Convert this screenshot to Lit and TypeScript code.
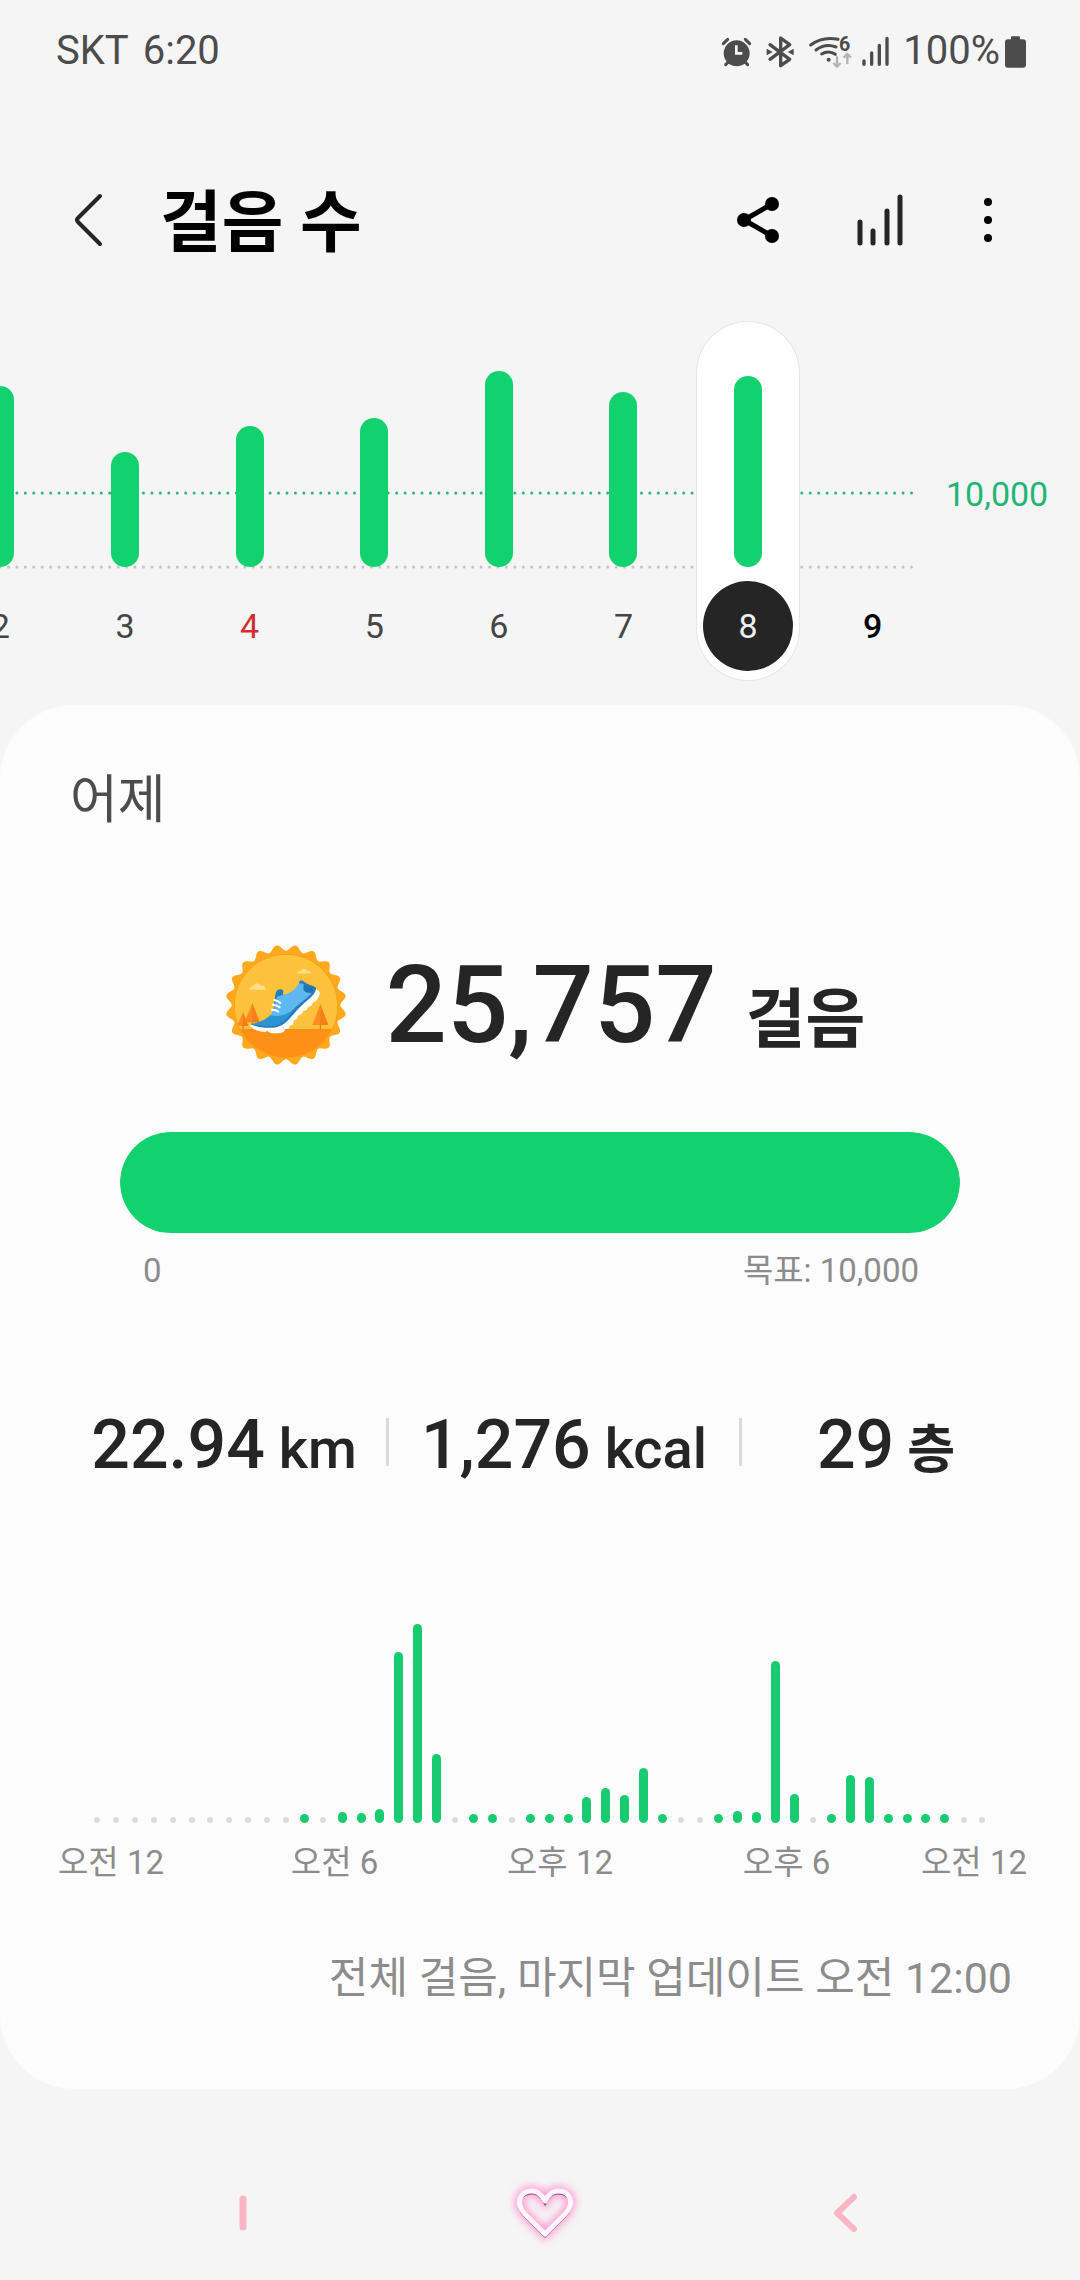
import { LitElement, html, css, svg } from "lit";
import { customElement, property, state } from "lit/decorators.js";
import { classMap } from "lit/directives/class-map.js";
import { styleMap } from "lit/directives/style-map.js";

interface Day {
  label: string;
  height: number;
  kind?: "holiday" | "today";
}

const DAYS: Day[] = [
  { label: "2", height: 181 },
  { label: "3", height: 115 },
  { label: "4", height: 141, kind: "holiday" },
  { label: "5", height: 149 },
  { label: "6", height: 196 },
  { label: "7", height: 175 },
  { label: "8", height: 191 },
  { label: "9", height: 0, kind: "today" },
];

// One value per half hour; 0 marks a slot without steps.
const HALF_HOURS = [
  0, 0, 0, 0, 0, 0, 0, 0, 0, 0, 0, 9, 0, 11, 10, 14, 171, 199, 69, 0, 9, 9, 0, 9,
  9, 9, 26, 35, 28, 55, 9, 0, 0, 9, 12, 11, 162, 29, 0, 9, 48, 46, 9, 9, 9, 9, 0, 0,
];

const HOUR_LABELS = ["오전 12", "오전 6", "오후 12", "오후 6", "오전 12"];

const sealPath = (() => {
  const points: string[] = [];
  for (let i = 0; i < 360; i++) {
    const a = (i * Math.PI) / 180;
    const r = 172 + 9 * Math.cos(20 * a + Math.PI);
    points.push(`${(217 + r * Math.sin(a)).toFixed(1)} ${(210 - r * Math.cos(a)).toFixed(1)}`);
  }
  return `M${points.join("L")}Z`;
})();

@customElement("status-bar")
class StatusBar extends LitElement {
  static styles = css`
    :host {
      display: flex;
      align-items: center;
      justify-content: space-between;
      height: 102px;
      padding: 0 53px 0 56px;
      color: #4c4c4c;
      font-size: 40px;
      line-height: 48px;
    }
    .side,
    .icons,
    .network {
      display: flex;
      align-items: center;
    }
    .left {
      gap: 14px;
    }
    .icons {
      gap: 13px;
    }
    .network {
      gap: 8px;
    }
    .battery {
      gap: 4px;
    }
    svg {
      display: block;
      height: 35px;
      fill: currentColor;
    }
    .digit {
      font: 700 59px Roboto, sans-serif;
    }
  `;
  render() {
    return html`
      <div class="side left"><span>SKT</span><span>6:20</span></div>
      <div class="icons">
        <svg width="31" viewBox="123 99 93 105" aria-hidden="true">
          <circle cx="170" cy="157" r="39" />
          <path d="M130 128L143 115M209 128L196 115M147 181L137 191M193 181L203 191" stroke="currentColor" stroke-width="9" stroke-linecap="round" />
          <path d="M169 133V157H187" fill="none" stroke="#f5f5f5" stroke-width="8" />
        </svg>
        <svg width="30" viewBox="255 99 90 105" aria-hidden="true">
          <path d="M270 131L329 175L302 194V111L329 131L270 175" fill="none" stroke="currentColor" stroke-width="10" stroke-linejoin="round" stroke-linecap="round" />
          <path d="M260 143L278 153L260 163ZM341 143L323 153L341 163Z" />
        </svg>
        <div class="network">
          <svg width="45" viewBox="384 99 135 105" aria-hidden="true">
            <path d="M392 132Q428 105 474 115M408 147Q436 126 468 138M425 159Q446 146 466 160" fill="none" stroke="currentColor" stroke-width="9" stroke-linecap="round" />
            <circle cx="446" cy="176" r="6" />
            <text class="digit" x="477" y="149">6</text>
            <path d="M471 166V196M460 186L471 197L482 186M502 190V160M491 170L502 159L513 170" fill="none" stroke="#b3b3b3" stroke-width="7" />
          </svg>
          <svg width="29" viewBox="543 99 87 105" aria-hidden="true">
            <path d="M552 180V190M575 156V190M598 133V190M621 112V190" stroke="currentColor" stroke-width="10" stroke-linecap="round" />
          </svg>
        </div>
        <div class="side battery">
          <span>100%</span>
          <svg width="23" viewBox="972 99 69 105" aria-hidden="true">
            <path d="M996 106H1017Q1020 106 1020 109V115H1029Q1038 115 1038 124V191Q1038 200 1029 200H984Q975 200 975 191V124Q975 115 984 115H993V109Q993 106 996 106Z" />
          </svg>
        </div>
      </div>
    `;
  }
}

@customElement("day-strip")
class DayStrip extends LitElement {
  @property({ type: Array }) days: Day[] = [];
  @state() private selected = 6;

  static styles = css`
    :host {
      display: flex;
      overflow: hidden;
      padding: 0 0 24px;
    }
    .plot {
      display: grid;
      flex: 1;
      min-width: 0;
    }
    .guides,
    .days {
      grid-area: 1 / 1;
    }
    .guides {
      width: 100%;
      height: 100%;
      fill: none;
      stroke-width: 3;
      stroke-linecap: round;
    }
    .goal-line {
      stroke: #2fb478;
    }
    .base-line {
      stroke: #c4c4c4;
    }
    .days {
      display: flex;
      margin-left: -62px;
      z-index: 1;
    }
    .day {
      flex: 1;
      display: flex;
      justify-content: center;
      padding: 1px 0;
      border: 0;
      background: none;
      font: 400 34px/40px Roboto, sans-serif;
      color: #454545;
    }
    .pill {
      display: flex;
      flex-direction: column;
      align-items: center;
      width: 102px;
      height: 358px;
      border-radius: 51px;
    }
    .track {
      display: flex;
      align-items: flex-end;
      height: 245px;
    }
    .bar {
      width: 28px;
      border-radius: 14px;
      background: #12d16f;
    }
    .number {
      display: grid;
      place-items: center;
      width: 90px;
      height: 90px;
      margin-top: 14px;
      border-radius: 50%;
    }
    .holiday {
      color: #cf2f2f;
    }
    .today {
      color: #000;
      font-weight: 500;
    }
    .selected .pill {
      background: #fff;
      box-shadow: 0 0 0 1px #e6e6e6;
    }
    .selected .number {
      background: #252525;
      color: #f0f0f0;
    }
    .goal {
      width: 134px;
      padding: 153px 0 0 11px;
      font-size: 34px;
      line-height: 40px;
      color: #22b573;
    }
  `;
  render() {
    return html`
      <div class="plot">
        <svg class="guides" aria-hidden="true">
          <svg x="-22" overflow="visible" width="100%">
            <line class="goal-line" x1="22" y1="172" x2="100%" y2="172" stroke-dasharray="0 8.44" />
            <line class="base-line" x1="22" y1="246" x2="100%" y2="246" stroke-dasharray="0 8.44" />
          </svg>
        </svg>
        <div class="days">
          ${this.days.map(
            (day, i) => html`<button
              class=${classMap({ day: true, selected: i === this.selected, holiday: day.kind === "holiday", today: day.kind === "today" })}
              aria-pressed=${i === this.selected ? "true" : "false"}
              @click=${() => (this.selected = i)}
            >
              <span class="pill">
                <span class="track"><span class="bar" style=${styleMap({ height: `${day.height}px` })}></span></span>
                <span class="number">${day.label}</span>
              </span>
            </button>`
          )}
        </div>
      </div>
      <div class="goal">10,000</div>
    `;
  }
}

@customElement("step-badge")
class StepBadge extends LitElement {
  static styles = css`
    :host {
      display: block;
    }
    svg {
      display: block;
      width: 122px;
      height: 122px;
    }
  `;
  render() {
    return html`<svg viewBox="34 27 366 366" aria-hidden="true">
      ${svg`<path d=${sealPath} fill="#fda81d" />`}
      <clipPath id="disc"><circle cx="217" cy="213" r="154" /></clipPath>
      <circle cx="217" cy="213" r="156" fill="#f99b17" />
      <g clip-path="url(#disc)">
        <rect x="50" y="50" width="334" height="334" fill="#fcc23b" />
        <rect x="50" y="282" width="334" height="110" fill="#fe9017" />
        <path d="M70 273L88 232L104 273Z M92 262L116 204L138 262Z M296 270L320 208L344 270Z" fill="#fb8c22" />
        <path d="M88 232L104 273H88Z M116 204L138 262H116Z M320 208L344 270H320Z" fill="#f67d18" />
        <path d="M88 270V284M116 260V284M320 268V284" stroke="#d9741c" stroke-width="3" />
      </g>
      <path d="M107 164C108 154 116 155 119 153C123 142 138 144 141 152C150 150 156 156 156 164Z" fill="#fee08a" />
      <path d="M251 115C252 108 259 108 262 108C266 98 277 101 279 108C287 106 293 110 294 115Z" fill="#fee08a" />
      <path d="M109 270C112 284 137 290 155 292L160 287L170 294C185 296 201 295 211 290L215 282L225 281L229 272L238 268L241 257L250 251L254 242L264 237L268 229L279 225L283 216L293 212L297 203L306 199C314 191 319 181 318 171L307 161L200 250Z" fill="#fff" />
      <path d="M111 267C138 265 162 251 173 239C184 225 180 197 187 172C191 161 205 160 209 168L208 180C231 180 256 165 257 140C261 132 267 136 271 140C284 150 294 149 307 158C310 177 278 197 256 219C236 239 216 275 180 278C149 280 125 275 111 267Z" fill="#277cb9" />
      <path d="M168 244C184 225 184 202 191 184C210 180 240 175 254 148C260 142 268 144 272 151C276 169 284 174 294 175C278 193 260 202 244 218C226 238 198 250 168 244Z" fill="#5db7f1" />
      <path d="M111 267C139 265 158 252 170 241C195 247 226 239 244 219C226 242 208 270 177 272C150 274 130 271 111 267Z" fill="#2a94d6" />
      <path d="M270 151C282 152 292 151 304 160C299 170 286 176 275 171C269 168 268 159 270 151Z" fill="#1f75b5" />
      <path d="M182 195Q193 197 200 204M177 209Q190 210 198 217M175 224Q186 224 194 230" fill="none" stroke="#fff" stroke-width="6" stroke-linecap="round" />
    </svg>`;
  }
}

@customElement("hourly-chart")
class HourlyChart extends LitElement {
  @property({ type: Array }) values: number[] = [];

  static styles = css`
    :host {
      display: block;
    }
    .bars {
      display: flex;
      align-items: flex-end;
      height: 200px;
      padding: 0 88px;
    }
    .slot {
      flex: 1;
      display: flex;
      justify-content: center;
    }
    .bar {
      width: 9px;
      border-radius: 5px;
      background: #19cb70;
    }
    .empty {
      width: 6px;
      height: 6px;
      border-radius: 3px;
      background: #dcdada;
    }
    .labels {
      display: grid;
      grid-template-columns: 222fr 225fr 226fr 227fr 148fr;
      margin-top: 20px;
      padding-right: 32px;
      font-size: 33px;
      line-height: 40px;
      text-align: center;
      white-space: nowrap;
      color: #8c8c8c;
    }
  `;
  render() {
    return html`
      <div class="bars">
        ${this.values.map(
          (v) => html`<div class="slot">
            ${v ? html`<div class="bar" style=${styleMap({ height: `${v}px` })}></div>` : html`<div class="empty"></div>`}
          </div>`
        )}
      </div>
      <div class="labels">${HOUR_LABELS.map((l) => html`<span>${l}</span>`)}</div>
    `;
  }
}

@customElement("app-root")
class AppRoot extends LitElement {
  static styles = css`
    :host {
      display: flex;
      flex-direction: column;
      min-height: 100vh;
      background: #f5f5f5;
      color: #252525;
      font-family: Roboto, "Noto Sans CJK KR", sans-serif;
    }
    button {
      display: grid;
      place-items: center;
      padding: 0;
      border: 0;
      background: none;
      color: inherit;
    }
    svg {
      display: block;
    }
    .header {
      display: flex;
      align-items: center;
      height: 100px;
      margin: 68px 0 51px;
      padding: 0 52px 0 48px;
    }
    .header button {
      width: 80px;
      height: 80px;
    }
    .title {
      flex: 1;
      margin: 0 0 0 32px;
      padding-top: 6px;
      font-size: 67px;
      line-height: 80px;
      font-weight: 700;
      color: #000;
    }
    .actions {
      display: flex;
      gap: 42px;
    }
    .actions .more {
      margin-left: -14px;
    }
    .card {
      padding: 66px 0 86px;
      border-radius: 74px;
      background: #fcfcfc;
    }
    .day-name {
      margin: 0;
      padding: 0 70px;
      font-size: 52px;
      line-height: 60px;
      font-weight: 400;
      color: #4c4c4c;
    }
    .total {
      display: flex;
      justify-content: center;
      gap: 39px;
      margin: 113px 0 66px;
      padding-left: 10px;
      font-weight: 500;
    }
    .count {
      font-size: 108px;
      line-height: 122px;
    }
    .total-unit {
      margin-left: 13px;
      font-size: 65px;
      line-height: 1;
      font-weight: 700;
    }
    .progress {
      height: 101px;
      margin: 0 120px;
      border-radius: 51px;
      overflow: hidden;
      background: #e8e8e8;
    }
    .fill {
      width: 100%;
      height: 100%;
      border-radius: 51px;
      background: #12d16f;
    }
    .range {
      display: flex;
      justify-content: space-between;
      margin-top: 18px;
      padding: 0 161px 0 143px;
      font-size: 33px;
      line-height: 40px;
      color: #8c8c8c;
    }
    .stats {
      display: grid;
      grid-template-columns: 327fr 353fr 288fr;
      margin: 114px 0 138px;
      padding: 0 50px 0 62px;
      font-size: 68px;
      line-height: 80px;
      font-weight: 500;
      text-align: center;
      white-space: nowrap;
    }
    .stat {
      display: grid;
      grid-template-columns: 1fr auto;
    }
    .stat-unit {
      font-size: 56px;
      line-height: 1;
    }
    .korean {
      font-size: 52px;
      font-weight: 700;
    }
    .divider {
      width: 3px;
      height: 48px;
      margin-top: 13px;
      background: #dadada;
    }
    .updated {
      margin: 70px 0 0;
      padding: 0 68px;
      font-size: 43px;
      line-height: 50px;
      text-align: right;
      color: #8c8c8c;
    }
    .nav {
      display: flex;
      justify-content: space-between;
      align-items: center;
      margin-top: auto;
      padding: 24px 195px 27px 203px;
    }
    .nav button {
      width: 80px;
      height: 80px;
    }
  `;
  render() {
    return html`
      <status-bar></status-bar>
      <header class="header">
        <button aria-label="뒤로">
          <svg width="80" height="80" viewBox="0 0 80 80"><path d="M52 16L30 38Q28 40 30 42L52 64" fill="none" stroke="#252525" stroke-width="4" stroke-linecap="round" /></svg>
        </button>
        <h1 class="title">걸음 수</h1>
        <div class="actions">
          <button aria-label="공유">
            <svg width="80" height="80" viewBox="0 0 80 80">
              <path d="M54 24L26 40L54 56" fill="none" stroke="#000" stroke-width="5" />
              <circle cx="54" cy="24" r="7" /><circle cx="26" cy="40" r="7" /><circle cx="54" cy="56" r="7" />
            </svg>
          </button>
          <button aria-label="통계">
            <svg width="80" height="80" viewBox="0 0 80 80"><path d="M20 42V63M33 51V63M47 31V63M60 17V63" stroke="#252525" stroke-width="5" stroke-linecap="round" /></svg>
          </button>
          <button class="more" aria-label="더보기">
            <svg width="80" height="80" viewBox="0 0 80 80"><circle cx="40" cy="22" r="4" /><circle cx="40" cy="40" r="4" /><circle cx="40" cy="58" r="4" /></svg>
          </button>
        </div>
      </header>
      <day-strip .days=${DAYS}></day-strip>
      <main class="card">
        <h2 class="day-name">어제</h2>
        <div class="total">
          <step-badge></step-badge>
          <div class="count">25,757<span class="total-unit"> 걸음</span></div>
        </div>
        <div class="progress" role="progressbar" aria-label="걸음" aria-valuemin="0" aria-valuemax="10000" aria-valuenow="10000"><div class="fill"></div></div>
        <div class="range"><span>0</span><span>목표: 10,000</span></div>
        <div class="stats">
          <div class="stat"><span>22.94<span class="stat-unit"> km</span></span><span class="divider"></span></div>
          <div class="stat"><span>1,276<span class="stat-unit"> kcal</span></span><span class="divider"></span></div>
          <div class="stat"><span>29<span class="stat-unit korean"> 층</span></span></div>
        </div>
        <hourly-chart .values=${HALF_HOURS}></hourly-chart>
        <p class="updated">전체 걸음, 마지막 업데이트 오전 12:00</p>
      </main>
      <nav class="nav">
        <button aria-label="최근 앱">
          <svg width="80" height="80" viewBox="0 0 80 80"><path d="M40 26V54" stroke="#f9b5c3" stroke-width="7" stroke-linecap="round" /></svg>
        </button>
        <button aria-label="홈">
          <svg width="80" height="80" viewBox="0 0 80 80">
            <defs>
              <filter id="glow" x="-50%" y="-50%" width="200%" height="200%"><feGaussianBlur stdDeviation="4" /></filter>
              <path id="heart" d="M41 61L21 41C10 29 17 18 28 18C34 18 38 22 41 28C44 22 48 18 54 18C65 18 72 29 61 41Z" />
            </defs>
            <use href="#heart" fill="none" stroke="#ff8fd0" stroke-width="9" filter="url(#glow)" />
            <use href="#heart" y="2" fill="none" stroke="#8d5378" stroke-width="3" />
            <use href="#heart" fill="none" stroke="#fff5fd" stroke-width="5" stroke-linejoin="round" />
          </svg>
        </button>
        <button aria-label="뒤로 가기">
          <svg width="80" height="80" viewBox="0 0 80 80"><path d="M49 24L32 40L49 56" fill="none" stroke="#f9b5c3" stroke-width="6" stroke-linecap="round" stroke-linejoin="round" /></svg>
        </button>
      </nav>
    `;
  }
}
